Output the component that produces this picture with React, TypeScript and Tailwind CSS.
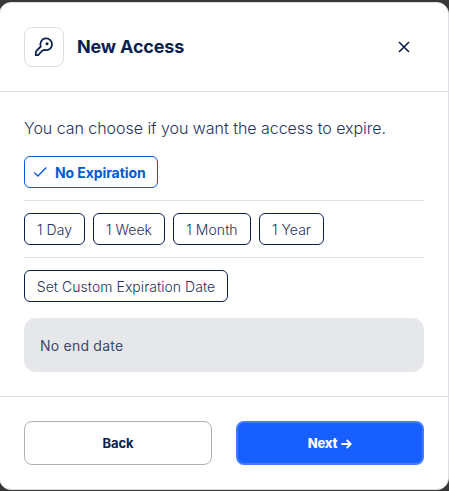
import React from "react";

function KeyIcon() {
  return (
    <svg width="20" height="20" viewBox="0 0 20 20" fill="none" stroke="#0a1f4d" strokeWidth="1.75" strokeLinejoin="round" strokeLinecap="round">
      <path d="M6.8 9.5A5.85 5.85 0 1 1 10.3 12.8L8.3 13.7L5.2 17L4.2 18.2H1.8V15.2L2.6 13.6Z" />
      <circle cx="13" cy="6.7" r="1.5" fill="#0a1f4d" stroke="none" />
    </svg>
  );
}

const durations = [
  { label: "1 Day", width: "w-[61px]" },
  { label: "1 Week", width: "w-[72px]" },
  { label: "1 Month", width: "w-[78px]" },
  { label: "1 Year", width: "w-[65px]" },
];

function OptionButton({ label, width }: { label: string; width: string }) {
  return (
    <button className={`${width} flex h-8 items-center justify-center whitespace-nowrap rounded-md border border-[#0a1f4d] text-[14px] font-light tracking-[0.04px] text-[#1f3260]`}>
      <span className="pt-px">{label}</span>
    </button>
  );
}

export default function App() {
  return (
    <div className="h-[491px] w-[449px] overflow-hidden bg-[#373737] pt-[2px] font-['Inter',sans-serif] text-[#0a1f4d]">
      <div className="-ml-px h-[488px] w-[450px] rounded-xl border border-[#dfdfe1] bg-white">
        <header className="flex h-[89px] items-center border-b border-[#dfdfe1] px-6">
          <div className="flex size-10 items-center justify-center rounded-lg border border-[#dedede]">
            <KeyIcon />
          </div>
          <h1 className="ml-[13px] text-[18px] font-bold leading-6 tracking-[-0.17px]">New Access</h1>
          <button aria-label="Close" className="ml-auto flex size-10 items-center justify-center">
            <svg width="12" height="12" viewBox="0 0 12 12" stroke="#0a1f4d" strokeWidth="1.6">
              <path d="M1 1L11 11M11 1L1 11" />
            </svg>
          </button>
        </header>
        <main className="h-[304px] px-6 pt-6">
          <p className="text-[16px] font-light leading-6 tracking-[-0.04px] text-[#1f3260]">You can choose if you want the access to expire.</p>
          <div className="mt-4 flex">
            <button className="flex h-8 items-center gap-2 rounded-md border border-[#005bd3] pl-[9px] pr-[11px] text-[14px] font-bold tracking-[-0.09px] text-[#005bd3]">
              <svg width="13" height="12" viewBox="0 0 13 12" fill="none" stroke="#005bd3" strokeWidth="1.3">
                <path d="M0.2 6.5L3.9 10L12.3 1.5" />
              </svg>
              <span className="pt-px">No Expiration</span>
            </button>
          </div>
          <hr className="my-3 border-[#dfdfe1]" />
          <div className="flex gap-2">
            {durations.map((d) => (
              <OptionButton key={d.label} label={d.label} width={d.width} />
            ))}
          </div>
          <hr className="my-3 border-[#dfdfe1]" />
          <div className="flex">
            <OptionButton label="Set Custom Expiration Date" width="w-[204px]" />
          </div>
          <div className="mt-4 flex h-[54px] items-center rounded-xl bg-[#e5e7eb] px-4 text-[14px] tracking-[0.22px] text-[#3b4a70]">
            <span>No end date</span>
          </div>
        </main>
        <footer className="grid grid-cols-2 gap-6 border-t border-[#dfdfe5] p-6">
          <button className="h-11 rounded-lg border border-[#b0b0b0] pt-0.5 text-[13px] font-bold tracking-[-0.1px]">Back</button>
          <button className="flex h-11 items-center justify-center gap-[4px] rounded-lg border-2 border-[#427cff] bg-[#175fff] text-[13px] font-extrabold tracking-[-0.2px] text-white">
            <span className="pt-0.5">Next</span>
            <svg className="mt-0.5" width="11" height="10" viewBox="0 0 11 10" fill="none" stroke="white" strokeWidth="1.8">
              <path d="M0.5 5H9.5M5.7 1L9.7 5L5.7 9" />
            </svg>
          </button>
        </footer>
      </div>
    </div>
  );
}
